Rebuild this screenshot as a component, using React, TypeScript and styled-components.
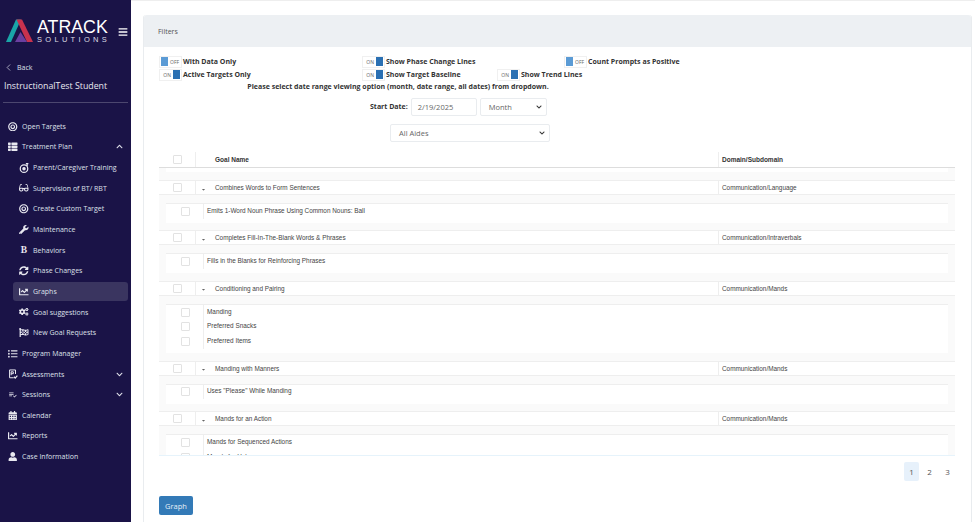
import React from "react";
import styled, { createGlobalStyle } from "styled-components";
import {
	FaBullseye,
	FaThList,
	FaGlasses,
	FaWrench,
	FaSyncAlt,
	FaChartLine,
	FaCogs,
	FaFlagCheckered,
	FaListUl,
	FaCalendarAlt,
	FaUser,
	FaChevronUp,
	FaChevronDown,
	FaBars,
	FaCaretDown,
} from "react-icons/fa";
import { MdPlaylistAddCheck } from "react-icons/md";
import { ChevronLeft } from "lucide-react";

const GlobalStyle = createGlobalStyle`
	html, body {
		margin: 0;
		padding: 0;
		background: #fff;
	}
	* {
		box-sizing: border-box;
	}
`;

const Page = styled.div`
	display: flex;
	width: 975px;
	height: 522px;
	overflow: hidden;
	font-family: "Open Sans", sans-serif;
`;

const Sidebar = styled.aside`
	width: 131px;
	flex: none;
	background: #1a1347;
	color: #dfe0ea;
	display: flex;
	flex-direction: column;
`;

const LogoRow = styled.div`
	display: flex;
	align-items: flex-start;
	height: 54px;
	padding: 19px 0 0 6px;
`;

const LogoWords = styled.div`
	display: flex;
	flex-direction: column;
	width: 75px;
	margin: 1px 0 0 4px;
	color: #fff;
	font-family: "Liberation Sans", sans-serif;
`;

const LogoTop = styled.span`
	font-size: 17.8px;
	line-height: 15.5px;
`;

const LogoBottom = styled.span`
	font-size: 7.5px;
	line-height: 8px;
	letter-spacing: 3.3px;
	color: #dcdce4;
`;

const Burger = styled.span`
	display: flex;
	margin: 8px 0 0 6px;
	font-size: 10px;
	color: #fff;
`;

const Back = styled.div`
	display: flex;
	align-items: center;
	gap: 3px;
	margin: 8px 0 0 3px;
	font-size: 7px;
	line-height: 10px;
`;

const Student = styled.div`
	margin: 7px 0 0 4px;
	font-size: 8.8px;
	line-height: 13px;
	color: #e8e8f0;
`;

const SideRule = styled.hr`
	width: 125px;
	margin: 9px 0 9px 3px;
	border: 0;
	border-top: 1px solid #4c476f;
`;

const Nav = styled.nav`
	display: flex;
	flex-direction: column;
	margin-top: 4px;
`;

const NavItem = styled.div<{ $sub?: boolean; $active?: boolean }>`
	display: flex;
	align-items: center;
	height: ${(p) => (p.$active ? "18.65px" : "20.65px")};
	margin: ${(p) => (p.$active ? "1px 3px 1px 13px" : p.$sub ? "0 3px 0 13px" : "0 3px 0 0")};
	padding-left: ${(p) => (p.$sub ? "6px" : "8px")};
	padding-right: 5px;
	border-radius: 3px;
	background: ${(p) => (p.$active ? "#3a3560" : "transparent")};
	font-size: 7px;
	white-space: nowrap;
`;

const NavIcon = styled.span`
	display: flex;
	justify-content: center;
	width: 10px;
	margin-right: 4px;
	font-size: 9.5px;
	font-weight: 700;
	font-family: "Liberation Serif", serif;
	color: #e8e8f0;
`;

const NavChevron = styled.span`
	display: flex;
	margin-left: auto;
	font-size: 7px;
`;

const Main = styled.main`
	flex: 1;
	display: flex;
	flex-direction: column;
	padding: 14px 0 0 12px;
	border-top: 1px solid #eee;
	min-width: 0;
`;

const Card = styled.section`
	display: flex;
	flex-direction: column;
	width: 829px;
	height: 507px;
	border: 1px solid #e9ecef;
	border-top: 0;
	border-bottom: 0;
	border-radius: 3px 3px 0 0;
`;

const CardHeader = styled.header`
	height: 32px;
	flex: none;
	display: flex;
	align-items: center;
	padding-left: 14px;
	background: #edf0f3;
	border-radius: 3px 3px 0 0;
	font-size: 7px;
	color: #555;
`;

const CardBody = styled.div`
	flex: 1;
	display: flex;
	flex-direction: column;
	padding: 8px 0 0 15px;
	min-height: 0;
`;

const OptionRow = styled.div`
	display: flex;
	height: 13px;
	align-items: center;
`;

const Option = styled.div<{ $width: number }>`
	display: flex;
	align-items: center;
	width: ${(p) => p.$width}px;
	font-size: 7px;
	font-weight: 700;
	color: #333;
	white-space: nowrap;
`;

const Toggle = styled.span<{ $on: boolean }>`
	display: flex;
	align-items: center;
	justify-content: ${(p) => (p.$on ? "flex-end" : "flex-start")};
	width: 23px;
	height: 12px;
	margin-right: 1px;
	padding: 1px;
	background: #fff;
	border: 1px solid #f0f0f0;
	font-size: 5px;
	font-weight: 400;
	color: #666;
	gap: 2px;
`;

const ToggleKnob = styled.i<{ $on: boolean }>`
	display: block;
	width: 7px;
	height: 9px;
	background: ${(p) => (p.$on ? "#2a70b3" : "#5b9bd5")};
`;

const Notice = styled.div`
	text-align: center;
	width: 478px;
	font-size: 7px;
	line-height: 12px;
	font-weight: 700;
	color: #333;
	white-space: nowrap;
`;

const DateRow = styled.div`
	display: flex;
	align-items: center;
	margin: 4px 0 0 211px;
	height: 19px;
`;

const DateLabel = styled.span`
	font-size: 7px;
	font-weight: 700;
	color: #333;
	margin-right: 3px;
`;

const Field = styled.div<{ $width: number }>`
	display: flex;
	align-items: center;
	justify-content: space-between;
	width: ${(p) => p.$width}px;
	height: 18px;
	padding: 0 4px 0 6px;
	margin-right: 3px;
	border: 1px solid #e9ecef;
	border-radius: 2px;
	background: #fff;
	font-size: 7.5px;
	color: #666;
`;

const SelectField = styled(Field)`
	padding-left: 8px;

	svg {
		color: #333;
	}
`;

const AideRow = styled.div`
	display: flex;
	margin: 8px 0 0 231px;
`;

const Table = styled.div`
	display: flex;
	flex-direction: column;
	width: 796px;
	height: 304px;
	margin-top: 10px;
	overflow: hidden;
	border-bottom: 1px solid #e6f3fb;
	font-family: "Liberation Sans", sans-serif;
	background: #fafafa;
`;

const GridRow = styled.div`
	display: grid;
	grid-template-columns: 37px 19px 503px 237px;
	flex: none;
	align-items: center;
	background: #fff;
`;

const HeadRow = styled(GridRow)`
	height: 16px;
	border-bottom: 1px solid #ddd;
	font-size: 6.5px;
	font-weight: 700;
	color: #333;
`;

const DomainCell = styled.span`
	display: flex;
	align-items: center;
	height: 100%;
	padding-left: 3px;
	border-left: 1px solid #eee;
`;

const Spacer = styled.div`
	flex: none;
	height: 12px;
`;

const SpacerCap = styled.div`
	height: 4px;
	margin: 0 7px;
	background: #fff;
`;

const GroupRow = styled(GridRow)`
	height: 15px;
	border-top: 1px solid #eee;
	border-bottom: 1px solid #eee;
	font-size: 6.4px;
	color: #444;
`;

const Box = styled.span`
	display: block;
	width: 9px;
	height: 9px;
	border: 1px solid #e2e2e2;
	border-radius: 1px;
	background: #fff;
`;

const CheckCell = styled.div`
	display: flex;
	justify-content: center;
	align-items: center;
	height: 100%;
	border-right: 1px solid #eee;
`;

const ChildCheckCell = styled(CheckCell)`
	padding-left: 1px;
`;

const Caret = styled.span`
	display: flex;
	font-size: 5px;
	margin-left: 5px;
	padding-top: 3px;
	color: #666;
`;

const Children = styled.div`
	flex: none;
	margin: 8px 7px 0;
	padding-bottom: 4.4px;
	background: #fff;
	border-top: 1px solid #eee;
`;

const ChildRow = styled.div`
	display: grid;
	grid-template-columns: 38px 1fr;
	height: 14.6px;
	align-items: center;
	font-size: 6.4px;
	color: #444;
`;

const ChildName = styled.span`
	padding: 0 0 2px 3px;
`;

const ChildGroup = styled.div`
	flex: none;
	padding-bottom: 7.5px;
`;

const Footer = styled.div`
	display: flex;
	justify-content: flex-end;
	width: 796px;
	margin-top: 6px;
`;

const PageLink = styled.span<{ $active?: boolean }>`
	display: flex;
	align-items: center;
	justify-content: center;
	width: 15px;
	height: 19px;
	margin-left: 3px;
	border-radius: 2px;
	background: ${(p) => (p.$active ? "#e7f1fb" : "transparent")};
	font-size: 8px;
	color: #555;
`;

const GraphButton = styled.button`
	width: 34px;
	height: 19px;
	margin-top: 15px;
	padding: 0;
	border: 0;
	border-radius: 2px;
	background: #337ab7;
	color: #e6eff7;
	font: 7.5px "Open Sans", sans-serif;
`;

const ParentIcon = () => (
	<svg width="10" height="10" viewBox="0 0 16 16" fill="none" stroke="currentColor" strokeWidth="2">
		<circle cx="8" cy="9" r="6" />
		<circle cx="8" cy="9" r="1.8" fill="currentColor" />
		<path d="M11 1h4M13 1v4" />
	</svg>
);

const AssessmentIcon = () => (
	<svg width="10" height="10" viewBox="0 0 16 16" fill="none" stroke="currentColor" strokeWidth="1.6">
		<path d="M9 14H2.5V1.5h9.5V8" />
		<path d="M5 10V4.5h3.5v3H5" />
		<path d="M9.5 12.5l2 2 3.5-4" strokeWidth="2" />
	</svg>
);

const LogoMark = () => (
	<svg width="27" height="23" viewBox="0 0 27 23">
		<polygon points="0,23 10,0.5 15,0.5 5,23" fill="#1aa5a8" />
		<polygon points="10.5,0.5 16,0.5 27,23 21,23" fill="#c8324e" />
		<polygon points="9,23 14.5,13 21,23" fill="#6b3fa0" />
	</svg>
);

const navItems = [
	{ label: "Open Targets", icon: <FaBullseye /> },
	{ label: "Treatment Plan", icon: <FaThList />, chevron: "up" },
	{ label: "Parent/Caregiver Training", icon: <ParentIcon />, sub: true },
	{ label: "Supervision of BT/ RBT", icon: <FaGlasses />, sub: true },
	{ label: "Create Custom Target", icon: <FaBullseye />, sub: true },
	{ label: "Maintenance", icon: <FaWrench />, sub: true },
	{ label: "Behaviors", icon: "B", sub: true },
	{ label: "Phase Changes", icon: <FaSyncAlt />, sub: true },
	{ label: "Graphs", icon: <FaChartLine />, sub: true, active: true },
	{ label: "Goal suggestions", icon: <FaCogs />, sub: true },
	{ label: "New Goal Requests", icon: <FaFlagCheckered />, sub: true },
	{ label: "Program Manager", icon: <FaListUl /> },
	{ label: "Assessments", icon: <AssessmentIcon />, chevron: "down" },
	{ label: "Sessions", icon: <MdPlaylistAddCheck />, chevron: "down" },
	{ label: "Calendar", icon: <FaCalendarAlt /> },
	{ label: "Reports", icon: <FaChartLine /> },
	{ label: "Case Information", icon: <FaUser /> },
];

const goals = [
	{ name: "Combines Words to Form Sentences", domain: "Communication/Language", items: ["Emits 1-Word Noun Phrase Using Common Nouns: Ball"] },
	{ name: "Completes Fill-In-The-Blank Words & Phrases", domain: "Communication/Intraverbals", items: ["Fills in the Blanks for Reinforcing Phrases"] },
	{ name: "Conditioning and Pairing", domain: "Communication/Mands", items: ["Manding", "Preferred Snacks", "Preferred Items"] },
	{ name: "Manding with Manners", domain: "Communication/Mands", items: ['Uses "Please" While Manding'] },
	{ name: "Mands for an Action", domain: "Communication/Mands", items: ["Mands for Sequenced Actions", "Mands for Help"] },
];

const Switch = ({ on }: { on: boolean }) => (
	<Toggle $on={on}>
		{on ? "ON" : null}
		<ToggleKnob $on={on} />
		{on ? null : "OFF"}
	</Toggle>
);

export default function App() {
	return (
		<Page>
			<GlobalStyle />
			<Sidebar>
				<LogoRow>
					<LogoMark />
					<LogoWords>
						<LogoTop>ATRACK</LogoTop>
						<LogoBottom>SOLUTIONS</LogoBottom>
					</LogoWords>
					<Burger>
						<FaBars />
					</Burger>
				</LogoRow>
				<Back>
					<ChevronLeft size={11} strokeWidth={1.5} />
					Back
				</Back>
				<Student>InstructionalTest Student</Student>
				<SideRule />
				<Nav>
					{navItems.map((item) => (
						<NavItem key={item.label} $sub={item.sub} $active={item.active}>
							<NavIcon>{item.icon}</NavIcon>
							{item.label}
							{item.chevron && (
								<NavChevron>{item.chevron === "up" ? <FaChevronUp /> : <FaChevronDown />}</NavChevron>
							)}
						</NavItem>
					))}
				</Nav>
			</Sidebar>
			<Main>
				<Card>
					<CardHeader>Filters</CardHeader>
					<CardBody>
						<OptionRow>
							<Option $width={203}>
								<Switch on={false} />
								With Data Only
							</Option>
							<Option $width={202}>
								<Switch on />
								Show Phase Change Lines
							</Option>
							<Option $width={130}>
								<Switch on={false} />
								Count Prompts as Positive
							</Option>
						</OptionRow>
						<OptionRow>
							<Option $width={203}>
								<Switch on />
								Active Targets Only
							</Option>
							<Option $width={135}>
								<Switch on />
								Show Target Baseline
							</Option>
							<Option $width={130}>
								<Switch on />
								Show Trend Lines
							</Option>
						</OptionRow>
						<Notice>Please select date range viewing option (month, date range, all dates) from dropdown.</Notice>
						<DateRow>
							<DateLabel>Start Date:</DateLabel>
							<Field $width={66}>2/19/2025</Field>
							<SelectField $width={67}>
								Month
								<FaChevronDown size={6} />
							</SelectField>
						</DateRow>
						<AideRow>
							<SelectField $width={160}>
								All Aides
								<FaChevronDown size={6} />
							</SelectField>
						</AideRow>
						<Table>
							<HeadRow>
								<CheckCell>
									<Box />
								</CheckCell>
								<span />
								<span>Goal Name</span>
								<DomainCell>Domain/Subdomain</DomainCell>
							</HeadRow>
							<Spacer>
								<SpacerCap />
							</Spacer>
							{goals.map((goal) => (
								<ChildGroup key={goal.name}>
									<GroupRow>
										<CheckCell>
											<Box />
										</CheckCell>
										<Caret>
											<FaCaretDown />
										</Caret>
										<span>{goal.name}</span>
										<DomainCell>{goal.domain}</DomainCell>
									</GroupRow>
									<Children>
										{goal.items.map((item) => (
											<ChildRow key={item}>
												<ChildCheckCell>
													<Box />
												</ChildCheckCell>
												<ChildName>{item}</ChildName>
											</ChildRow>
										))}
									</Children>
								</ChildGroup>
							))}
						</Table>
						<Footer>
							<PageLink $active>1</PageLink>
							<PageLink>2</PageLink>
							<PageLink>3</PageLink>
						</Footer>
						<GraphButton>Graph</GraphButton>
					</CardBody>
				</Card>
			</Main>
		</Page>
	);
}
